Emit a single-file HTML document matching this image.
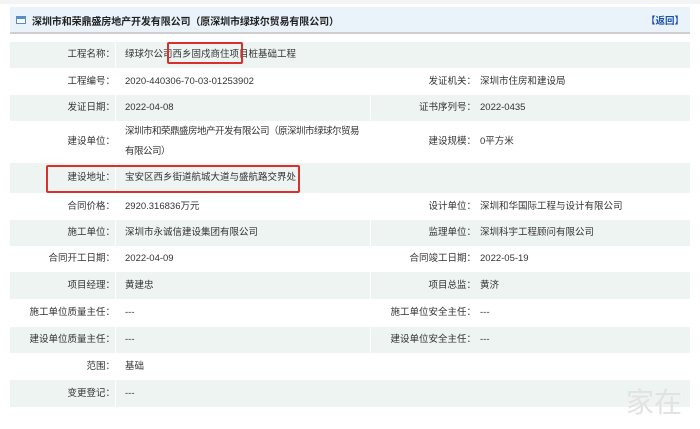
<!DOCTYPE html>
<html><head><meta charset="utf-8"><style>
body{margin:0;width:700px;height:429px;background:#fff;font-family:"Liberation Sans","Noto Sans CJK SC",sans-serif;font-size:9.5px;color:#333;position:relative;overflow:hidden}
.top{position:absolute;left:0;top:0;width:700px;height:4px;background:#f4f4f4}
.hdr{position:absolute;left:10px;top:7px;width:680px;height:25px;background:#eaf3fa;border-bottom:2px solid #cfcfcf}
.hdr .ic{position:absolute;left:6px;top:9px;width:10px;height:8px;border:1px solid #5a8fc2;border-top:3px solid #5a8fc2;box-sizing:border-box;background:#fff}
.hdr .t{position:absolute;left:22px;top:6px;font-weight:bold;font-size:10px;color:#222;letter-spacing:-0.1px}
.hdr .b{position:absolute;right:6px;top:6px;font-size:9.5px;color:#1c4fa8;font-weight:bold}
.row{position:absolute;left:10px;width:680px}
.s{background:#eef4f1}
.c{position:absolute;top:0;bottom:0;display:flex;align-items:center;line-height:12px}
.l1{left:0;width:105px;justify-content:flex-end;border-right:1px solid #fff}
.v1{left:115px;width:240px}
.l2{left:360px;width:105px;justify-content:flex-end;border-left:1px solid #fff}
.v2{left:470px}
.red{position:absolute;border:2px solid #d8312c;border-radius:2px}
.wm{position:absolute;right:18px;bottom:8px;color:#e2e2e2;font-size:28px}
</style></head><body>
<div class="top"></div>
<div class="hdr"><div class="ic"></div><div class="t">深圳市和荣鼎盛房地产开发有限公司（原深圳市绿球尔贸易有限公司）</div><div class="b">【返回】</div></div>

<div class="row s" style="top:42px;height:26px"><div class="c l1">工程名称：</div><div class="c v1" style="width:400px">绿球尔公司西乡固戍商住项目桩基础工程</div></div>
<div class="row" style="top:68px;height:27px"><div class="c l1">工程编号：</div><div class="c v1">2020-440306-70-03-01253902</div><div class="c l2">发证机关：</div><div class="c v2">深圳市住房和建设局</div></div>
<div class="row s" style="top:95px;height:26px"><div class="c l1">发证日期：</div><div class="c v1">2022-04-08</div><div class="c l2">证书序列号：</div><div class="c v2">2022-0435</div></div>
<div class="row" style="top:121px;height:42px"><div class="c l1">建设单位：</div><div class="c v1" style="line-height:20px;display:block;padding-top:1px;white-space:nowrap;letter-spacing:-0.5px"><div>深圳市和荣鼎盛房地产开发有限公司（原深圳市绿球尔贸易</div><div>有限公司）</div></div><div class="c l2">建设规模：</div><div class="c v2">0平方米</div></div>
<div class="row s" style="top:163px;height:30px"><div class="c l1">建设地址：</div><div class="c v1" style="width:300px">宝安区西乡街道航城大道与盛航路交界处</div></div>
<div class="row" style="top:193px;height:27px"><div class="c l1">合同价格：</div><div class="c v1">2920.316836万元</div><div class="c l2">设计单位：</div><div class="c v2">深圳和华国际工程与设计有限公司</div></div>
<div class="row s" style="top:220px;height:26px"><div class="c l1">施工单位：</div><div class="c v1">深圳市永诚信建设集团有限公司</div><div class="c l2">监理单位：</div><div class="c v2">深圳科宇工程顾问有限公司</div></div>
<div class="row" style="top:246px;height:26px"><div class="c l1">合同开工日期：</div><div class="c v1">2022-04-09</div><div class="c l2">合同竣工日期：</div><div class="c v2">2022-05-19</div></div>
<div class="row s" style="top:272px;height:27px"><div class="c l1">项目经理：</div><div class="c v1">黄建忠</div><div class="c l2">项目总监：</div><div class="c v2">黄济</div></div>
<div class="row" style="top:299px;height:28px"><div class="c l1">施工单位质量主任：</div><div class="c v1">---</div><div class="c l2">施工单位安全主任：</div><div class="c v2">---</div></div>
<div class="row s" style="top:327px;height:26px"><div class="c l1">建设单位质量主任：</div><div class="c v1">---</div><div class="c l2">建设单位安全主任：</div><div class="c v2">---</div></div>
<div class="row" style="top:353px;height:27px"><div class="c l1">范围：</div><div class="c v1">基础</div></div>
<div class="row s" style="top:380px;height:27px"><div class="c l1">变更登记：</div><div class="c v1">---</div></div>

<div class="red" style="left:167px;top:42px;width:72px;height:18px"></div>
<div class="red" style="left:46px;top:165px;width:250px;height:24px"></div>
<div class="wm">家在</div>
</body></html>
